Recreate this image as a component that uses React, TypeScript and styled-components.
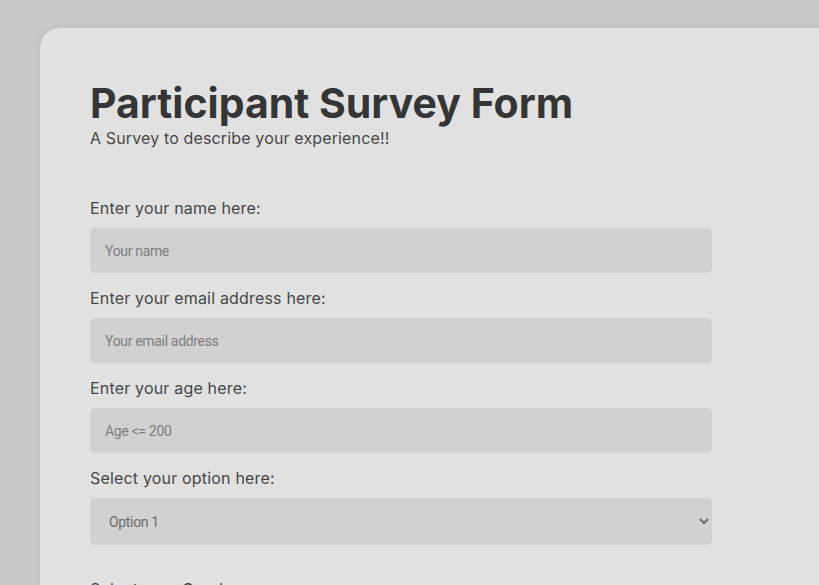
import React, {useState} from "react";
import styled, {createGlobalStyle} from "styled-components";

const GlobalStyle = createGlobalStyle`
  html, body {
    margin: 0;
    padding: 0;
    overflow: hidden;
    background: #c9c9c9;
  }
  body {
    font-family: Inter, "Noto Sans", sans-serif;
  }
`;

const Page = styled.div`
  padding: 28px 0 0 40px;
  min-height: 100vh;
  box-sizing: border-box;
`;

const Card = styled.div`
  width: 840px;
  background: #e1e1e1;
  border-radius: 20px 0 0 0;
  padding: 50px 50px 60px;
  box-shadow: 0 0 6px rgba(0, 0, 0, 0.08);
  box-sizing: border-box;
  min-height: 700px;
`;

const Title = styled.h1`
  margin: 0;
  font-size: 41px;
  line-height: 50px;
  font-weight: 700;
  color: #353535;
`;

const Subtitle = styled.p`
  margin: 0;
  font-size: 16px;
  line-height: 20px;
  letter-spacing: 0.14px;
  color: #474747;
`;

const Form = styled.form`
  width: 622px;
  margin-top: 50px;
  display: flex;
  flex-direction: column;
`;

const Field = styled.div<{ $gap?: number }>`
  display: flex;
  flex-direction: column;
  margin-bottom: ${p => p.$gap ?? 15}px;
`;

const Label = styled.label`
  font-size: 16px;
  line-height: 20px;
  letter-spacing: 0.18px;
  color: #474747;
  margin-bottom: 10px;
`;

const Input = styled.input`
  height: 45px;
  border: none;
  border-radius: 5px;
  background: #d1d1d1;
  padding: 0 15px;
  font-family: Roboto, sans-serif;
  font-size: 14px;
  letter-spacing: -0.33px;
  color: #555;
  outline: none;
  box-sizing: border-box;

  &::placeholder {
    color: #7e7e7e;
  }
`;

const Select = styled.select`
  height: 47px;
  border: none;
  border-radius: 5px;
  background-color: #d1d1d1;
  padding: 0 15px;
  font-family: Roboto, sans-serif;
  font-size: 14px;
  letter-spacing: -0.33px;
  color: #6b6b6b;
  outline: none;
  box-sizing: border-box;
`;

export default function App() {
    const [option, setOption] = useState('1')

    return (
        <Page>
            <GlobalStyle/>
            <Card>
                <Title>Participant Survey Form</Title>
                <Subtitle>A Survey to describe your experience!!</Subtitle>
                <Form onSubmit={e => e.preventDefault()}>
                    <Field>
                        <Label htmlFor="name">Enter your name here:</Label>
                        <Input id="name" type="text" placeholder="Your name"/>
                    </Field>
                    <Field>
                        <Label htmlFor="email">Enter your email address here:</Label>
                        <Input id="email" type="email" placeholder="Your email address"/>
                    </Field>
                    <Field>
                        <Label htmlFor="age">Enter your age here:</Label>
                        <Input id="age" type="number" placeholder="Age <= 200"/>
                    </Field>
                    <Field $gap={34}>
                        <Label htmlFor="option">Select your option here:</Label>
                        <Select id="option" value={option} onChange={e => setOption(e.currentTarget.value)}>
                            <option value="1">Option 1</option>
                            <option value="2">Option 2</option>
                            <option value="3">Option 3</option>
                        </Select>
                    </Field>
                    <Field>
                        <Label>Select your Gender:</Label>
                    </Field>
                </Form>
            </Card>
        </Page>
    )
}
